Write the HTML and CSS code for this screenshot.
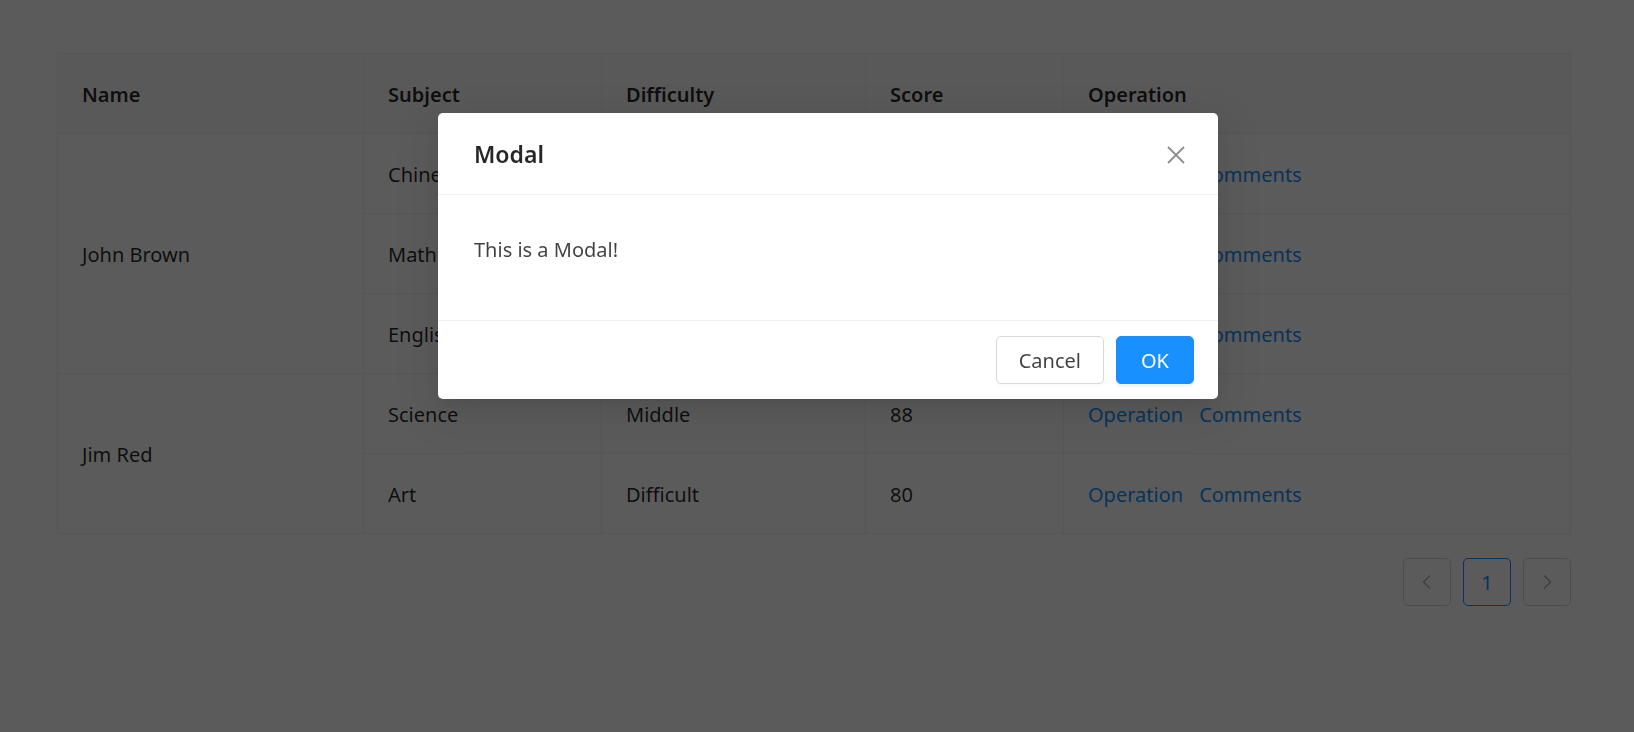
FILE: index.html
```html
<!DOCTYPE html>
<html lang="en">
<head>
<meta charset="utf-8">
<title>Modal</title>
<link rel="stylesheet" href="styles.css">
</head>
<body>
<div class="page">
  <table class="grid">
    <colgroup>
      <col class="c-name">
      <col class="c-subject">
      <col class="c-diff">
      <col class="c-score">
      <col>
    </colgroup>
    <thead>
      <tr><th>Name</th><th>Subject</th><th>Difficulty</th><th>Score</th><th>Operation</th></tr>
    </thead>
    <tbody>
      <tr><td rowspan="3">John Brown</td><td>Chinese</td><td>Easy</td><td>95</td><td><div class="ops"><a>Operation</a><a>Comments</a></div></td></tr>
      <tr><td>Math</td><td>Middle</td><td>92</td><td><div class="ops"><a>Operation</a><a>Comments</a></div></td></tr>
      <tr><td>English</td><td>Easy</td><td>90</td><td><div class="ops"><a>Operation</a><a>Comments</a></div></td></tr>
      <tr><td rowspan="2">Jim Red</td><td>Science</td><td>Middle</td><td>88</td><td><div class="ops"><a>Operation</a><a>Comments</a></div></td></tr>
      <tr><td>Art</td><td>Difficult</td><td>80</td><td><div class="ops"><a>Operation</a><a>Comments</a></div></td></tr>
    </tbody>
  </table>
  <div class="pager">
    <span class="pg pg-disabled"><svg width="16" height="16" viewBox="0 0 16 16"><polyline points="11,1.5 4.5,8 11,14.5" fill="none" stroke="currentColor" stroke-width="1.5"/></svg></span>
    <span class="pg pg-active">1</span>
    <span class="pg pg-disabled"><svg width="16" height="16" viewBox="0 0 16 16"><polyline points="5,1.5 11.5,8 5,14.5" fill="none" stroke="currentColor" stroke-width="1.5"/></svg></span>
  </div>
</div>

<div class="mask"></div>

<div class="modal">
  <div class="modal-header">
    <div class="modal-title">Modal</div>
  </div>
  <button class="modal-close" aria-label="Close"><svg width="18" height="18" viewBox="0 0 18 18"><path d="M1 1 L17 17 M17 1 L1 17" fill="none" stroke="currentColor" stroke-width="1.8"/></svg></button>
  <div class="modal-body">
    <p>This is a Modal!</p>
  </div>
  <div class="modal-footer">
    <button class="btn">Cancel</button>
    <button class="btn btn-primary">OK</button>
  </div>
</div>
</body>
</html>
```

FILE: styles.css
```css
html, body {
  margin: 0;
  padding: 0;
  background: #ffffff;
  font-family: "Noto Sans", "Open Sans", sans-serif;
  font-size: 20px;
  color: rgba(0, 0, 0, 0.85);
}

.page {
  padding: 53px 0 0 57px;
  width: 1514px;
}

.grid {
  width: 1514px;
  table-layout: fixed;
  border-collapse: collapse;
  border-spacing: 0;
}

.c-name { width: 306px; }
.c-subject { width: 238px; }
.c-diff { width: 264px; }
.c-score { width: 198px; }

.grid th,
.grid td {
  border: 1px solid #f0f0f0;
  padding: 25px 24px 23px;
  line-height: 31px;
  text-align: left;
  vertical-align: middle;
  font-weight: 400;
}

.grid th {
  background: #fafafa;
  font-weight: 600;
  color: rgba(0, 0, 0, 0.85);
}

.ops {
  display: flex;
  gap: 16px;
}

.ops a {
  color: #1890ff;
  cursor: pointer;
}

.pager {
  display: flex;
  justify-content: flex-end;
  gap: 12px;
  margin-top: 24px;
}

.pg {
  box-sizing: border-box;
  width: 48px;
  height: 48px;
  border: 1px solid #d9d9d9;
  border-radius: 5px;
  display: flex;
  align-items: center;
  justify-content: center;
  background: #fff;
  font-size: 20px;
}

.pg-disabled {
  color: rgba(0, 0, 0, 0.3);
}

.pg-active {
  border-color: #1890ff;
  color: #1890ff;
}

.mask {
  position: fixed;
  inset: 0;
  background: rgba(0, 0, 0, 0.645);
}

.modal {
  position: absolute;
  left: 438px;
  top: 113px;
  width: 780px;
  background: #fff;
  border-radius: 5px;
  box-shadow: 0 4px 9px -6px rgba(0, 0, 0, 0.12), 0 9px 24px 0 rgba(0, 0, 0, 0.08), 0 13px 42px 12px rgba(0, 0, 0, 0.05);
}

.modal-header {
  padding: 25px 36px 23px;
  border-bottom: 1px solid #f0f0f0;
}

.modal-title {
  font-size: 23px;
  line-height: 33px;
  font-weight: 600;
  color: rgba(0, 0, 0, 0.85);
}

.modal-close {
  position: absolute;
  top: 0;
  right: 0;
  width: 84px;
  height: 84px;
  border: 0;
  background: transparent;
  padding: 0;
  display: flex;
  align-items: center;
  justify-content: center;
  color: rgba(0, 0, 0, 0.45);
  cursor: pointer;
}

.modal-body {
  padding: 38px 36px 34px;
}

.modal-body p {
  margin: 0 0 20px;
  line-height: 33px;
  color: rgba(0, 0, 0, 0.75);
}

.modal-footer {
  padding: 15px 24px;
  border-top: 1px solid #f0f0f0;
  display: flex;
  justify-content: flex-end;
  gap: 12px;
}

.btn {
  box-sizing: border-box;
  height: 48px;
  padding: 0 22px;
  border: 1px solid #d9d9d9;
  border-radius: 5px;
  background: #fff;
  font-family: "Noto Sans", "Open Sans", sans-serif;
  font-size: 20px;
  color: rgba(0, 0, 0, 0.75);
  box-shadow: 0 3px 0 rgba(0, 0, 0, 0.015);
  cursor: pointer;
}

.btn-primary {
  padding: 0 24px;
  background: #1890ff;
  border-color: #1890ff;
  color: #fff;
  box-shadow: 0 3px 0 rgba(0, 0, 0, 0.045);
}
```
